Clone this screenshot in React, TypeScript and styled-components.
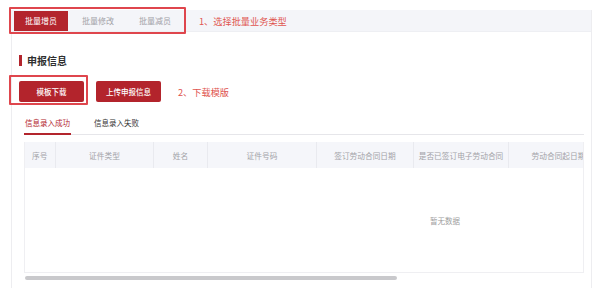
import React, { useState } from 'react'
import styled, { createGlobalStyle } from 'styled-components'

const GlobalStyle = createGlobalStyle`
  html, body {
    margin: 0;
    padding: 0;
    background: #ffffff;
  }
  body {
    font-family: "Noto Sans CJK SC", "Noto Sans", sans-serif;
    color: #333;
  }
`

const businessTabs = ['批量增员', '批量修改', '批量减员']
const resultTabs = ['信息录入成功', '信息录入失败']

const columns = [
  { title: '序号', width: 31, align: 'left' },
  { title: '证件类型', width: 98 },
  { title: '姓名', width: 54 },
  { title: '证件号码', width: 109 },
  { title: '签订劳动合同日期', width: 97 },
  { title: '是否已签订电子劳动合同', width: 95 },
  { title: '劳动合同起日期', width: 100 },
  { title: '劳动合同止日期', width: 100 },
  { title: '操作', width: 156 },
]

function App() {
  const [business, setBusiness] = useState(0)
  const [result, setResult] = useState(0)

  return (
    <>
      <GlobalStyle />
      <Page>
        <TopBar>
          <Highlight $inset="-4px -4px -3px -5px">
            <BizTabs>
              {businessTabs.map((t, i) => (
                <BizTab key={t} $active={i === business} onClick={() => setBusiness(i)}>
                  {t}
                </BizTab>
              ))}
            </BizTabs>
          </Highlight>
          <Note>1、选择批量业务类型</Note>
        </TopBar>

        <Card>
          <SectionTitle>申报信息</SectionTitle>

          <ActionRow>
            <Highlight $inset="-6px -4px -3px -10px">
              <RedButton>模板下载</RedButton>
            </Highlight>
            <RedButton>上传申报信息</RedButton>
            <Note>2、下载模版</Note>
          </ActionRow>

          <ResultArea>
            <ResultTabs>
              {resultTabs.map((t, i) => (
                <ResultTab key={t} $active={i === result} onClick={() => setResult(i)}>
                  {t}
                </ResultTab>
              ))}
            </ResultTabs>

            <TableBox>
              <TableScroll>
                <TableInner>
                  <HeadRow>
                    {columns.map((c) => (
                      <HeadCell key={c.title} $width={c.width} $align={c.align}>
                        {c.title}
                      </HeadCell>
                    ))}
                  </HeadRow>
                  <EmptyBody>暂无数据</EmptyBody>
                </TableInner>
              </TableScroll>
              <ScrollTrack>
                <ScrollThumb />
              </ScrollTrack>
            </TableBox>
          </ResultArea>
        </Card>
      </Page>
    </>
  )
}

export default App

const Page = styled.div`
  margin: 10px 8px 0 11px;
  border-right: 1px solid #ededf0;
  height: 278px;
`

const TopBar = styled.div`
  display: flex;
  align-items: center;
  height: 22px;
  padding: 1px 0 1px 3px;
  box-sizing: border-box;
  background: #f4f5f9;
  border-bottom: 1px solid #eeeff3;
`

const Highlight = styled.div<{ $inset: string }>`
  position: relative;
  display: flex;

  &::after {
    content: '';
    position: absolute;
    inset: ${(p) => p.$inset};
    border: 2px solid rgba(220, 50, 58, 0.9);
    border-radius: 1px;
    pointer-events: none;
  }
`

const BizTabs = styled.div`
  display: flex;
  gap: 3px;
`

const BizTab = styled.div<{ $active?: boolean }>`
  width: 54px;
  height: 20px;
  line-height: 20px;
  text-align: center;
  font-size: 8px;
  color: ${(p) => (p.$active ? '#ffffff' : '#a2a2a8')};
  background: ${(p) => (p.$active ? '#b3252d' : 'transparent')};
  cursor: pointer;
`

const Note = styled.span`
  margin-left: 17px;
  font-size: 9.2px;
  color: #e05550;
  white-space: nowrap;
`

const Card = styled.div`
  border-left: 1px solid #ededf0;
  padding: 21px 7px 0 7px;
  height: 256px;
  box-sizing: border-box;
`

const SectionTitle = styled.div`
  display: flex;
  align-items: center;
  height: 14px;
  font-size: 10px;
  font-weight: 700;
  color: #2f2f2f;

  &::before {
    content: '';
    width: 3px;
    height: 11px;
    margin-right: 5px;
    background: #b3252d;
  }
`

const ActionRow = styled.div`
  display: flex;
  align-items: center;
  gap: 12px;
  margin-top: 14px;

  ${Note} {
    margin-left: 5px;
  }
`

const RedButton = styled.button`
  width: 65px;
  height: 21px;
  padding: 0;
  border: none;
  border-radius: 2px;
  background: #b3242c;
  color: #ffffff;
  font-family: inherit;
  font-size: 7.5px;
  font-weight: 500;
  cursor: pointer;
`

const ResultArea = styled.div`
  margin: 11px 0 0 5px;
`

const ResultTabs = styled.div`
  display: flex;
  gap: 22px;
  height: 22px;
  box-shadow: inset 0 -1px 0 #e6e6ea;
`

const ResultTab = styled.div<{ $active?: boolean }>`
  height: 20px;
  line-height: 20px;
  padding: 0 1px;
  font-size: 7.5px;
  color: ${(p) => (p.$active ? '#b3252d' : '#333333')};
  border-bottom: 2px solid ${(p) => (p.$active ? '#b3252d' : 'transparent')};
  cursor: pointer;
`

const TableBox = styled.div`
  margin-top: 7px;
`

const TableScroll = styled.div`
  overflow: hidden;
  border-left: 1px solid #efeff2;
  border-right: 1px solid #efeff2;
  border-bottom: 1px solid #efeff2;
`

const TableInner = styled.div`
  width: 840px;
`

const HeadRow = styled.div`
  display: flex;
  height: 26px;
  background: #f5f6fa;
`

const HeadCell = styled.div<{ $width: number; $align?: string }>`
  flex: 0 0 ${(p) => p.$width}px;
  box-sizing: border-box;
  display: flex;
  align-items: center;
  justify-content: ${(p) => (p.$align === 'left' ? 'flex-start' : 'center')};
  padding-left: ${(p) => (p.$align === 'left' ? '7px' : '0')};
  font-size: 7.7px;
  color: #a3a3a8;
  white-space: nowrap;
  border-right: 1px solid #e9eaef;
`

const EmptyBody = styled.div`
  height: 104px;
  display: flex;
  align-items: center;
  justify-content: center;
  font-size: 7.5px;
  color: #a0a0a0;
`

const ScrollTrack = styled.div`
  height: 10px;
  display: flex;
  align-items: center;
  padding-left: 1px;
`

const ScrollThumb = styled.div`
  width: 372px;
  height: 4px;
  border-radius: 2px;
  background: #c9c9cc;
`
